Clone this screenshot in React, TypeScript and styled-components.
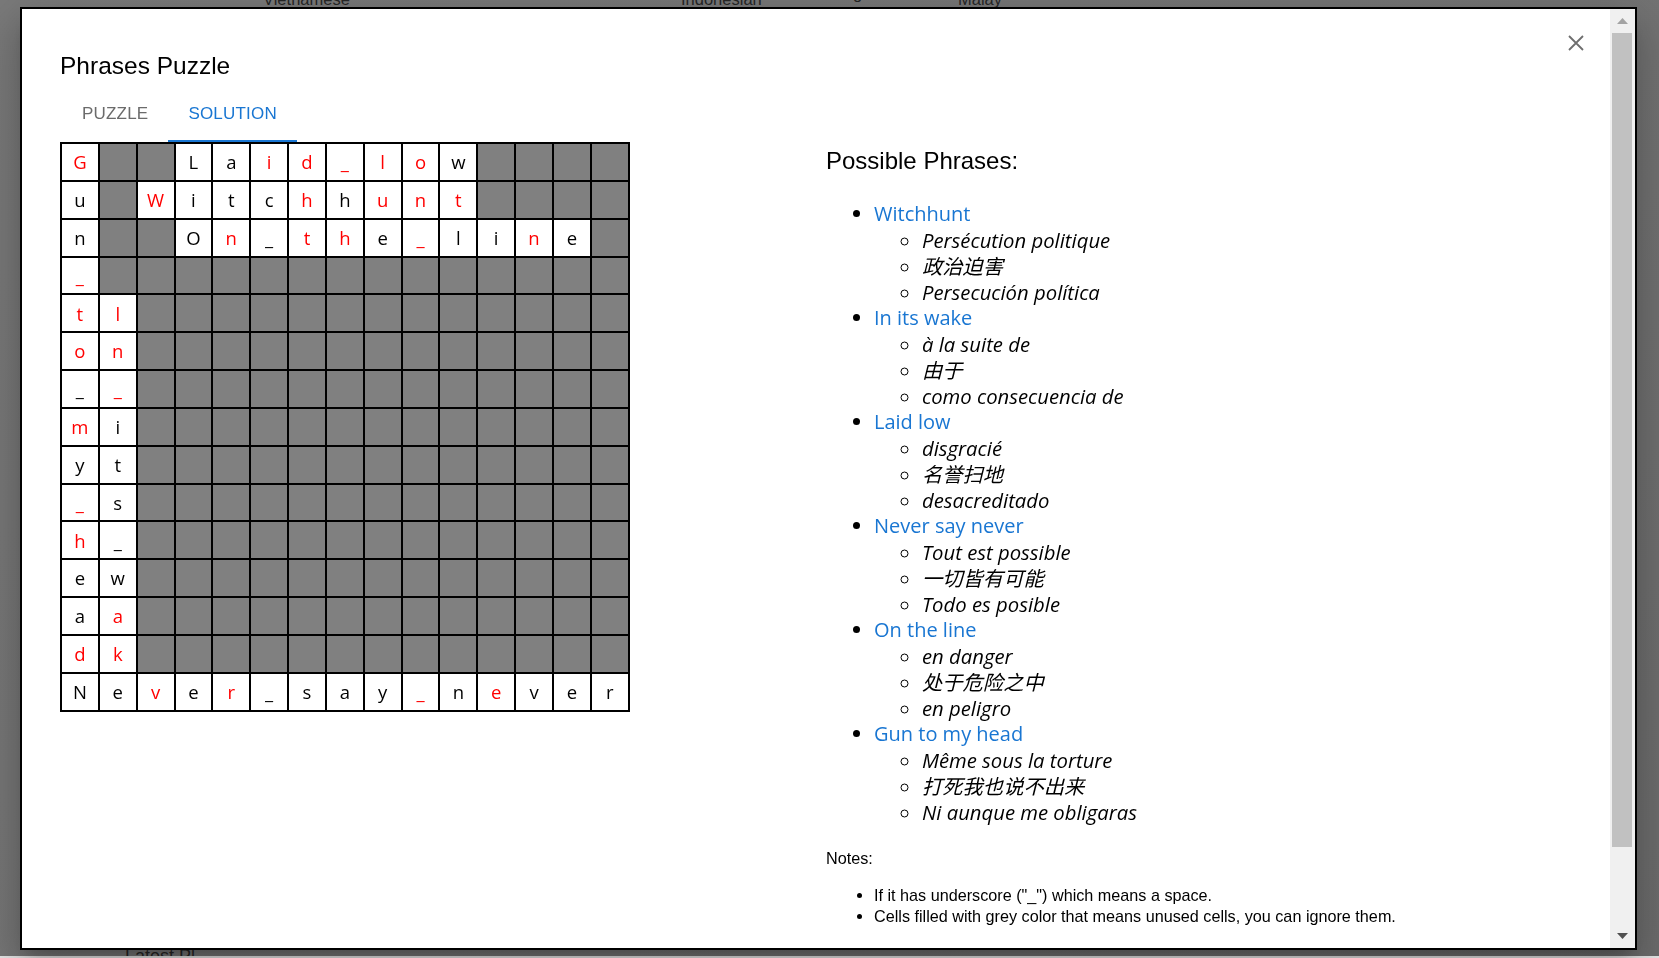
import React from "react";
import styled, { createGlobalStyle } from "styled-components";

const GlobalStyle = createGlobalStyle`
  html, body { margin: 0; padding: 0; }
  body { overflow: hidden; font-family: "Liberation Sans", Arial, sans-serif; }
`;

const Page = styled.div`
  height: 100vh;
  background: linear-gradient(135deg, #7a7a7a 0%, #747474 60%, #6c6c6c 100%);
  display: flex;
  flex-direction: column;
  overflow: hidden;
`;

const TopLabels = styled.div`
  display: grid;
  grid-template-columns: 263px 418px 172px 105px auto;
  align-items: start;
  margin-top: -11px;
  font: 16.5px/20px "Liberation Sans", Arial, sans-serif;
  color: #262626;
`;

const RaisedLabel = styled.span`
  margin-top: -6px;
`;

const Spacer = styled.div`
  flex: 1;
`;

const BottomLabel = styled.div`
  padding-left: 125px;
  font: 18px/20px "Liberation Sans", Arial, sans-serif;
  color: #262626;
  margin-bottom: -10px;
`;

const Strip = styled.div`
  height: 2px;
  background: #e6e6e6;
  position: relative;
`;

const Dialog = styled.div`
  position: fixed;
  left: 20px;
  top: 7px;
  width: 1617px;
  height: 943px;
  box-sizing: border-box;
  border: 2px solid #000;
  background: #fff;
  display: flex;
  box-shadow: 0 11px 15px -7px rgba(0, 0, 0, 0.2), 0 24px 38px 3px rgba(0, 0, 0, 0.14),
    0 9px 46px 8px rgba(0, 0, 0, 0.12);
`;

const Body = styled.div`
  position: relative;
  flex: 1;
  min-width: 0;
  box-sizing: border-box;
  padding: 43px 0 0 38px;
  overflow: hidden;
`;

const CloseButton = styled.button`
  position: absolute;
  top: 26px;
  right: 26px;
  width: 16px;
  height: 16px;
  padding: 0;
  border: 0;
  background: none;
  cursor: pointer;
  display: block;
`;

const Title = styled.h2`
  margin: 0;
  font: 400 24.5px/28px "Liberation Sans", Arial, sans-serif;
  color: #000;
`;

const Tabs = styled.div`
  display: flex;
  margin: 14px 0 0 2px;
  height: 48px;
`;

const Tab = styled.div<{ $active?: boolean }>`
  box-sizing: border-box;
  height: 48px;
  padding: 8px 20px 0;
  font: 17px/24px "Liberation Sans", Arial, sans-serif;
  letter-spacing: 0.2px;
  text-transform: uppercase;
  color: ${(p) => (p.$active ? "#1976d2" : "#6b6b6b")};
  border-bottom: 2px solid ${(p) => (p.$active ? "#1976d2" : "transparent")};
`;

const Columns = styled.div`
  display: grid;
  grid-template-columns: 766px 1fr;
  align-items: start;
`;

const Board = styled.div`
  display: grid;
  grid-template-columns: repeat(15, 35.85px);
  grid-auto-rows: 35.85px;
  gap: 2px;
  padding: 2px;
  background: #000;
  width: max-content;
`;

const Cell = styled.div<{ $blank?: boolean; $red?: boolean }>`
  background: ${(p) => (p.$blank ? "#808080" : "#fff")};
  color: ${(p) => (p.$red ? "#ff0000" : "#000")};
  display: flex;
  align-items: center;
  justify-content: center;
  padding-top: 1px;
  box-sizing: border-box;
  font: 18.5px/1 "Open Sans", "Noto Sans", sans-serif;
`;

const RightColumn = styled.div`
  display: flex;
  flex-direction: column;
`;

const Heading = styled.h3`
  margin: 5px 0 0;
  font: 400 24px/28px "Liberation Sans", Arial, sans-serif;
  color: #000;
`;

const PhraseList = styled.ul`
  margin: 26px 0 0;
  padding-left: 48px;
  list-style: disc;
  font: 20px/26px "Open Sans", "Noto Sans CJK SC", sans-serif;
  color: #000;
`;

const PhraseName = styled.span`
  color: #1976d2;
`;

const SubList = styled.ul`
  margin: 0;
  padding-left: 48px;
  list-style: circle;
`;

const SubItem = styled.li`
  font-style: italic;
  font-size: 20.3px;
`;

const NotesLabel = styled.p`
  margin: 23px 0 0;
  font: 16.2px/21px "Liberation Sans", Arial, sans-serif;
  color: #000;
`;

const NotesList = styled.ul`
  margin: 16px 0 0;
  padding-left: 48px;
  font: 16.2px/21px "Liberation Sans", Arial, sans-serif;
  color: #000;
`;

const Scrollbar = styled.div`
  width: 25px;
  flex: none;
  background: #f0f0f0;
  display: flex;
  flex-direction: column;
`;

const ScrollArrow = styled.div<{ $h: number }>`
  height: ${(p) => p.$h}px;
  display: flex;
  align-items: center;
  justify-content: center;
`;

const ScrollTrack = styled.div`
  flex: 1;
  padding: 0 3px 0 2px;
`;

const ScrollThumb = styled.div`
  height: 814px;
  background: #c1c1c1;
`;

const ROWS: [string, string][] = [
  ["G##Laid_low####", "r....rrrrr....."],
  ["u#Witchhunt####", "..r...r.rrr...."],
  ["n##On_the_line#", "....r.rr.r..r.."],
  ["_##############", "r.............."],
  ["tl#############", "rr............."],
  ["on#############", "rr............."],
  ["__#############", ".r............."],
  ["mi#############", "r.............."],
  ["yt#############", "..............."],
  ["_s#############", "r.............."],
  ["h_#############", "r.............."],
  ["ew#############", "..............."],
  ["aa#############", ".r............."],
  ["dk#############", "rr............."],
  ["Never_say_never", "..r.r....r.r..."],
];

const PHRASES = [
  { name: "Witchhunt", items: ["Persécution politique", "政治迫害", "Persecución política"] },
  { name: "In its wake", items: ["à la suite de", "由于", "como consecuencia de"] },
  { name: "Laid low", items: ["disgracié", "名誉扫地", "desacreditado"] },
  { name: "Never say never", items: ["Tout est possible", "一切皆有可能", "Todo es posible"] },
  { name: "On the line", items: ["en danger", "处于危险之中", "en peligro"] },
  { name: "Gun to my head", items: ["Même sous la torture", "打死我也说不出来", "Ni aunque me obligaras"] },
];

export default function App() {
  return (
    <>
      <GlobalStyle />
      <Page>
        <TopLabels>
          <span />
          <span>Vietnamese</span>
          <span>Indonesian</span>
          <RaisedLabel>g</RaisedLabel>
          <span>Malay</span>
        </TopLabels>
        <Spacer />
        <BottomLabel>Latest Pl</BottomLabel>
        <Strip />
      </Page>
      <Dialog role="dialog">
        <Body>
          <CloseButton aria-label="close">
            <svg width="16" height="16" viewBox="0 0 16 16">
              <path d="M1 1 L15 15 M15 1 L1 15" stroke="#6e6e6e" strokeWidth="1.8" fill="none" />
            </svg>
          </CloseButton>
          <Title>Phrases Puzzle</Title>
          <Tabs>
            <Tab>Puzzle</Tab>
            <Tab $active>Solution</Tab>
          </Tabs>
          <Columns>
            <Board>
              {ROWS.map(([chars, mask], r) =>
                chars.split("").map((ch, c) => (
                  <Cell key={`${r}-${c}`} $blank={ch === "#"} $red={mask[c] === "r"}>
                    {ch === "#" ? "" : ch}
                  </Cell>
                ))
              )}
            </Board>
            <RightColumn>
              <Heading>Possible Phrases:</Heading>
              <PhraseList>
                {PHRASES.map((p) => (
                  <li key={p.name}>
                    <PhraseName>{p.name}</PhraseName>
                    <SubList>
                      {p.items.map((it) => (
                        <SubItem key={it}>{it}</SubItem>
                      ))}
                    </SubList>
                  </li>
                ))}
              </PhraseList>
              <NotesLabel>Notes:</NotesLabel>
              <NotesList>
                <li>If it has underscore ("_") which means a space.</li>
                <li>Cells filled with grey color that means unused cells, you can ignore them.</li>
              </NotesList>
            </RightColumn>
          </Columns>
        </Body>
        <Scrollbar>
          <ScrollArrow $h={24}>
            <svg width="11" height="6" viewBox="0 0 11 6">
              <path d="M0 6 L5.5 0 L11 6 Z" fill="#a3a3a3" />
            </svg>
          </ScrollArrow>
          <ScrollTrack>
            <ScrollThumb />
          </ScrollTrack>
          <ScrollArrow $h={25}>
            <svg width="11" height="6" viewBox="0 0 11 6">
              <path d="M0 0 L11 0 L5.5 6 Z" fill="#505050" />
            </svg>
          </ScrollArrow>
        </Scrollbar>
      </Dialog>
    </>
  );
}
